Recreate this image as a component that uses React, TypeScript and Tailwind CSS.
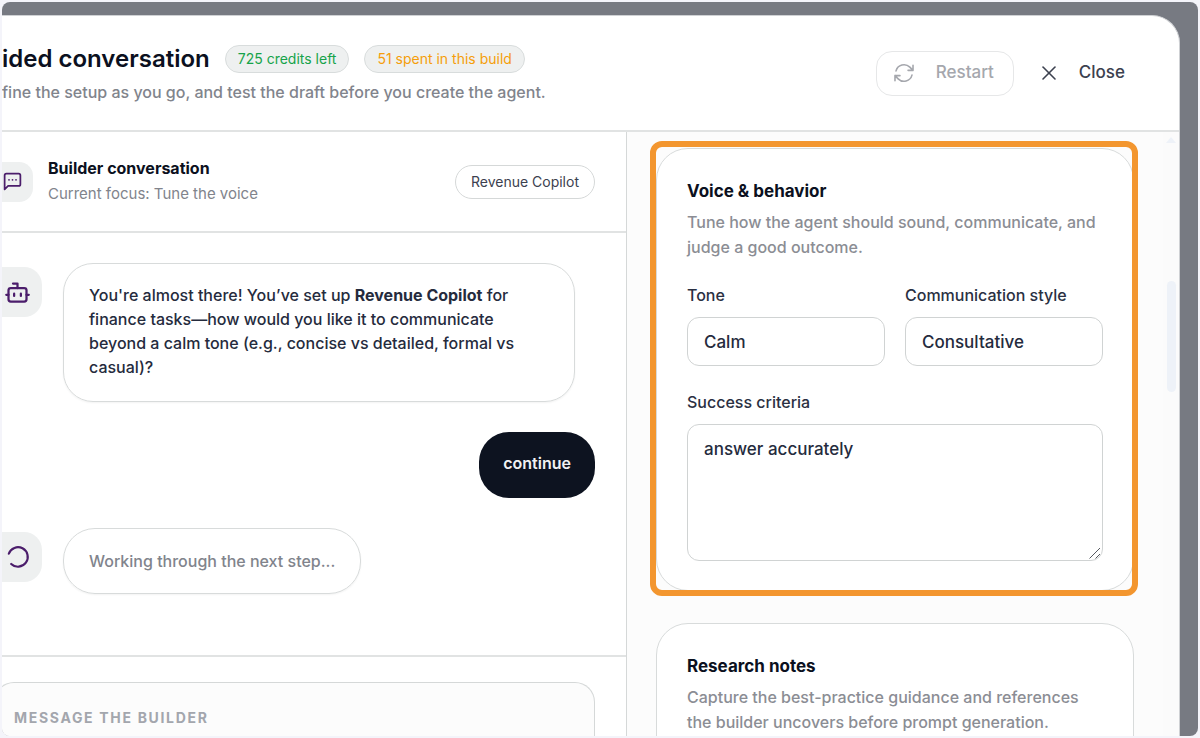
import React from "react";
import { Bot, X } from "lucide-react";

interface PanelHeadingProps {
  title: string;
  description: string;
}

const PanelHeading: React.FC<PanelHeadingProps> = ({ title, description }) => {
  return (
    <div>
      <h3 className="text-[17px] leading-6 font-bold text-[#0b1020]">
        {title}
      </h3>
      <p className="mt-[7px] text-[16px] leading-[25px] font-medium text-[#8b8d94]">
        {description}
      </p>
    </div>
  );
};

const MessageIcon = () => (
  <svg
    className="size-[21px] text-[#4b1d6b]"
    viewBox="0 0 24 24"
    fill="none"
    stroke="currentColor"
    strokeWidth="2"
    strokeLinecap="round"
    strokeLinejoin="round"
  >
    <path d="M21 15a2 2 0 0 1-2 2H7l-4 4V5a2 2 0 0 1 2-2h14a2 2 0 0 1 2 2z" />
    <path d="M8 10h.01M12 10h.01M16 10h.01" />
  </svg>
);

const SpinnerIcon = () => (
  <svg
    className="size-[26px] text-[#4b1d6b]"
    viewBox="0 0 24 24"
    fill="none"
    stroke="currentColor"
    strokeWidth="2"
    strokeLinecap="round"
  >
    <path d="M3.5 9a9 9 0 1 1 2.2 9.4" />
  </svg>
);

const RestartIcon = () => (
  <svg
    className="size-6"
    viewBox="0 0 24 24"
    fill="none"
    stroke="currentColor"
    strokeWidth="1.6"
    strokeLinecap="round"
    strokeLinejoin="round"
  >
    <path d="M16.023 9.348h4.992v-.001M2.985 19.644v-4.992m0 0h4.992m-4.993 0 3.181 3.183a8.25 8.25 0 0 0 13.803-3.7M4.031 9.865a8.25 8.25 0 0 1 13.803-3.7l3.181 3.182m0-4.991v4.99" />
  </svg>
);

const Header = () => {
  return (
    <header className="flex h-[116px] items-center justify-between border-b-2 border-[#e1e3e3] pr-[54px]">
      <div>
        <div className="flex items-center gap-[15px]">
          <h1 className="text-[24px] leading-8 font-semibold whitespace-nowrap text-[#0b1020]">
            ided conversation
          </h1>
          <div className="flex gap-[15px]">
            <span className="rounded-full border border-[#d8dcdc] bg-[#eef0f0] px-3 text-[14px] leading-[26px] text-[#16a34a]">
              725 credits left
            </span>
            <span className="rounded-full border border-[#d8dcdc] bg-[#eef0f0] px-3 text-[14px] leading-[26px] text-[#f59e0b]">
              51 spent in this build
            </span>
          </div>
        </div>
        <p className="mt-[5px] text-[16px] leading-6 font-medium text-[#81848c]">
          fine the setup as you go, and test the draft before you create the
          agent.
        </p>
      </div>
      <div className="flex items-center gap-[23px]">
        <button
          disabled
          className="flex h-[45px] items-center gap-5 rounded-[16px] border border-[#e6e7e8] pr-[19px] pl-[15px] text-[17px] font-medium text-[#a5a7ad]"
        >
          <RestartIcon />
          Restart
        </button>
        <button className="flex items-center gap-[18px] text-[17px] font-medium text-[#3c414f]">
          <X className="size-6" strokeWidth={1.6} />
          Close
        </button>
      </div>
    </header>
  );
};

const Conversation = () => {
  return (
    <section className="flex w-[625px] shrink-0 flex-col border-r border-[#d5d8d8]">
      <div className="flex h-[101px] shrink-0 items-center border-b-2 border-[#e1e3e3] pr-[31px]">
        <div className="flex h-10 w-[31px] items-center rounded-r-[14px] bg-[#eef0f0]">
          <MessageIcon />
        </div>
        <div className="ml-[15px] flex-1 pb-[2px]">
          <h2 className="text-[16px] leading-[25px] font-bold text-[#0b1020]">
            Builder conversation
          </h2>
          <p className="text-[15px] leading-[25px] text-[#81848c]">
            Current focus: Tune the voice
          </p>
        </div>
        <span className="rounded-full border border-[#d5d8d8] px-[15px] text-[14px] leading-8 text-[#3c414f]">
          Revenue Copilot
        </span>
      </div>

      <div className="flex flex-1 flex-col gap-[30px] pt-[30px] pr-[31px]">
        <div className="flex items-start gap-[21px]">
          <div className="mt-1 flex h-[50px] w-10 items-center rounded-r-[18px] bg-[#eef0f0] pl-[2px]">
            <Bot className="size-[27px] text-[#4b1d6b]" strokeWidth={2} />
          </div>
          <div className="w-[512px] rounded-[30px] border border-[#d8dbdb] px-[25px] pt-[19px] pb-[22px] text-[16px] leading-6 font-medium text-[#252b3d] shadow-xs">
            You're almost there! You’ve set up{" "}
            <strong className="font-bold">Revenue Copilot</strong> for finance
            tasks—how would you like it to communicate beyond a calm tone (e.g.,
            concise vs detailed, formal vs casual)?
          </div>
        </div>
        <div className="self-end rounded-[30px] bg-[#0d1320] px-6 pt-[19px] pb-[23px] text-[16px] leading-6 font-semibold text-[#f1f1f2]">
          continue
        </div>
        <div className="flex items-start gap-[21px]">
          <div className="mt-1 flex h-[50px] w-10 items-center rounded-r-[18px] bg-[#eef0f0] pl-[3px]">
            <SpinnerIcon />
          </div>
          <div className="rounded-[32px] border border-[#d8dbdb] px-[25px] py-5 text-[16px] leading-6 font-medium text-[#81848c] shadow-xs">
            Working through the next step...
          </div>
        </div>
      </div>

      <div className="h-[81px] shrink-0 overflow-hidden border-t-2 border-[#e1e3e3] pt-[25px] pr-[31px]">
        <div className="-ml-2 h-full rounded-t-[20px] border border-b-0 border-[#d5d8d8] bg-[#fcfcfc] pt-[23px] pl-[19px]">
          <h2 className="text-[14px] leading-6 font-bold tracking-[0.12em] text-[#a3a6ad]">
            MESSAGE THE BUILDER
          </h2>
        </div>
      </div>
    </section>
  );
};

const DraftPanel = () => {
  return (
    <aside className="relative flex-1 overflow-hidden bg-[#fcfcfc] pt-4 pr-[45px] pl-[29px]">
      <div className="relative rounded-[32px] border border-[#d8dbdb] bg-white px-[30px] pt-[30px] pb-[29px]">
        <PanelHeading
          title="Voice & behavior"
          description="Tune how the agent should sound, communicate, and judge a good outcome."
        />
        <div className="mt-[23px] grid grid-cols-2 gap-5">
          <div>
            <label
              htmlFor="tone"
              className="block text-[16px] leading-6 font-medium text-[#2a3042]"
            >
              Tone
            </label>
            <input
              id="tone"
              defaultValue="Calm"
              className="mt-[10px] block h-[49px] w-full rounded-[12px] border border-[#d0d3d3] px-4 text-[17px] font-medium text-[#252b3d]"
            />
          </div>
          <div>
            <label
              htmlFor="style"
              className="block text-[16px] leading-6 font-medium whitespace-nowrap text-[#2a3042]"
            >
              Communication style
            </label>
            <input
              id="style"
              defaultValue="Consultative"
              className="mt-[10px] block h-[49px] w-full rounded-[12px] border border-[#d0d3d3] px-4 text-[17px] font-medium text-[#252b3d]"
            />
          </div>
        </div>
        <label
          htmlFor="criteria"
          className="mt-6 block text-[16px] leading-6 font-medium text-[#2a3042]"
        >
          Success criteria
        </label>
        <div className="relative mt-[10px]">
          <textarea
            id="criteria"
            defaultValue="answer accurately"
            className="block h-[137px] w-full resize-none rounded-[12px] border border-[#d0d3d3] px-4 py-3 text-[17px] leading-6 font-medium text-[#252b3d]"
          />
          <svg
            className="pointer-events-none absolute right-[2px] bottom-[2px] size-3"
            viewBox="0 0 12 12"
            stroke="#55585f"
            strokeWidth="1"
          >
            <path d="M0.5 11.5 11 1M6.5 11.5 11 7" />
          </svg>
        </div>
        {/* highlight around the active card */}
        <div className="pointer-events-none absolute -top-2 -right-[5px] -bottom-[6px] -left-[7px] rounded-[12px] border-6 border-[#f3962f]" />
      </div>

      <div className="mt-8 h-[160px] rounded-[32px] border border-[#d8dbdb] bg-white px-[30px] pt-[30px]">
        <PanelHeading
          title="Research notes"
          description="Capture the best-practice guidance and references the builder uncovers before prompt generation."
        />
      </div>

      <div className="absolute top-0 right-0 h-full w-4 bg-[#fbfbfb]">
        <svg className="mx-auto mt-[5px] h-2 w-3" viewBox="0 0 12 8">
          <path d="M6 0 11 6H1z" fill="#eef2f8" />
        </svg>
        <div className="mx-auto mt-[136px] h-[111px] w-[9px] rounded-full bg-[#eef2f8]" />
      </div>
    </aside>
  );
};

const App: React.FC = () => {
  return (
    <div className="flex h-screen bg-[#f4f4fa] font-['Inter',sans-serif]">
      <div className="m-[2px] flex flex-1 overflow-hidden rounded-[8px] bg-[#777a82] pt-[13px] pr-[18px]">
        <main className="flex min-w-0 flex-1 flex-col overflow-hidden rounded-tr-[28px] border-t border-r border-[#cfd1d4] bg-white">
          <Header />
          <div className="flex min-h-0 flex-1">
            <Conversation />
            <DraftPanel />
          </div>
        </main>
      </div>
    </div>
  );
};

export default App;
